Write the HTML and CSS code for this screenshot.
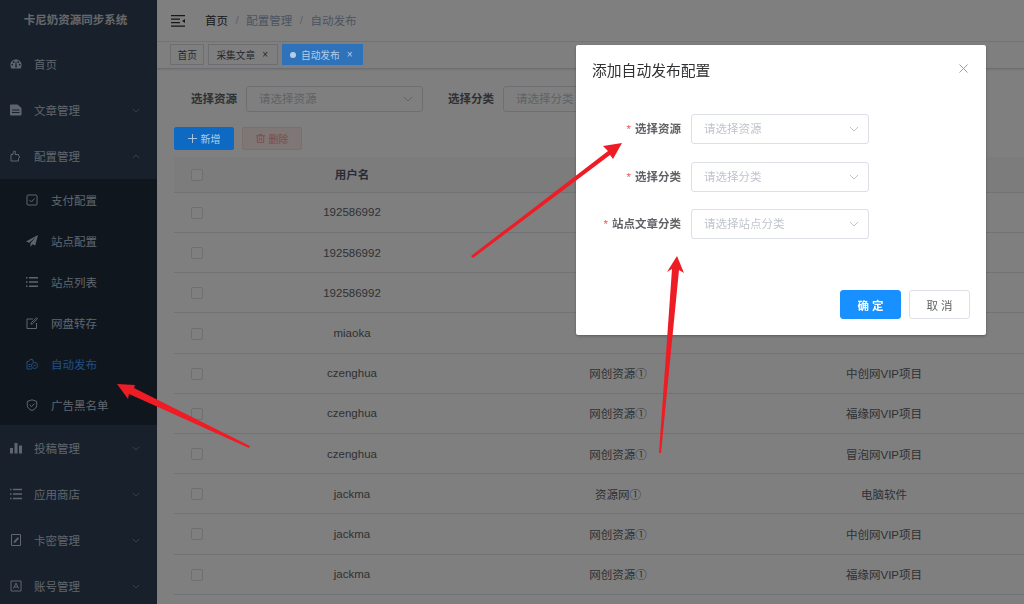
FILE: index.html
```html
<!DOCTYPE html>
<html>
    <head>
        <meta charset="utf-8">
        <title>自动发布</title>
        <link rel="stylesheet" href="styles.css">
    </head>
    <body>
        <div class="app">
            <aside class="sidebar">
                <div class="logo">卡尼奶资源同步系统</div>
                <div class="menu-item">
                    <svg class="icon" viewBox="0 0 12 12"><path fill="currentColor" d="M6 1.5C2.8 1.5.4 3.9.4 7c0 1.300.4 2.500 1 3.500h9.200c.6-1 1-2.200 1-3.500 0-3.100-2.400-5.500-5.600-5.500zM2.300 7.600a.9.9 0 1 1 0-1.800.9.9 0 0 1 0 1.800zm1.400-2.700a.9.9 0 1 1 0-1.800.9.9 0 0 1 0 1.800zM6.700 9.300a1.100 1.100 0 0 1-1.500-.9l.5-5h.6l.5 5c.1.200 0 .6-.1.900zm1.600-4.400a.9.900 0 1 1 0-1.800.9.9 0 0 1 0 1.800zm1.400 2.700a.9.9 0 1 1 0-1.800.9.900 0 0 1 0 1.800z"/></svg>
                    <span>首页</span>
                </div>
                <div class="menu-item">
                    <svg class="icon" viewBox="0 0 12 12"><path fill="currentColor" d="M1 .5h6.500L11.500 4v6.500a1 1 0 0 1-1 1H1a1 1 0 0 1-1-1v-9a1 1 0 0 1 1-1zM2 5.500v1h7.500v-1zm0 2.500v1h7.500V8z"/></svg>
                    <span>文章管理</span>
                    <svg class="arrow" viewBox="0 0 10 6"><path d="M1 1l4 4 4-4"/></svg>
                </div>
                <div class="menu-item">
                    <svg class="icon" viewBox="0 0 12 12"><path fill="none" stroke="currentColor" stroke-width="1" d="M1 4.500h2V3l1-2 1.500.5L5 4.500h3.500V6l1.500 1-1.500 1.200v2.800H1z"/></svg>
                    <span>配置管理</span>
                    <svg class="arrow" viewBox="0 0 10 6"><path d="M1 5l4-4 4 4"/></svg>
                </div>
                <div class="submenu">
                    <div class="sub-item">
                        <svg class="icon" viewBox="0 0 12 12"><rect x="1" y="1" width="10" height="10" rx="1" fill="none" stroke="currentColor"/><path fill="none" stroke="currentColor" d="M3.500 6l2 2 3-3.500"/></svg>
                        <span>支付配置</span>
                    </div>
                    <div class="sub-item">
                        <svg class="icon" viewBox="0 0 12 12"><path fill="currentColor" d="M12 0L0 6.500l3.200 1.300L10 2 4.500 8.300V12l2-2.700 2.700 1.100z"/></svg>
                        <span>站点配置</span>
                    </div>
                    <div class="sub-item">
                        <svg class="icon" viewBox="0 0 12 12"><path fill="currentColor" d="M0 1h1.500v1.400H0zm3 0h9v1.400H3zM0 5.300h1.500v1.400H0zm3 0h9v1.400H3zM0 9.600h1.500V11H0zm3 0h9V11H3z"/></svg>
                        <span>站点列表</span>
                    </div>
                    <div class="sub-item">
                        <svg class="icon" viewBox="0 0 12 12"><path fill="none" stroke="currentColor" d="M7 2H1v9.500h9.500V6M5 7.200l.4-1.600L10.500.8l1 1-5 4.900z"/></svg>
                        <span>网盘转存</span>
                    </div>
                    <div class="sub-item active">
                        <svg class="icon" viewBox="0 0 12 12"><path fill="none" stroke="currentColor" d="M1 11V3.500h1.500L4 1.500h2.500L7.500 4M6 11H1"/><circle cx="8.500" cy="7.500" r="3" fill="none" stroke="currentColor"/><path fill="none" stroke="currentColor" d="M7.500 7.500h2M2.500 6.500h2M2.500 8.500h2"/></svg>
                        <span>自动发布</span>
                    </div>
                    <div class="sub-item">
                        <svg class="icon" viewBox="0 0 12 12"><path fill="none" stroke="currentColor" d="M6 .8l4.700 1.600v3.800c0 2.600-2 4.300-4.700 5.200-2.700-.9-4.700-2.600-4.700-5.200V2.400z"/><path fill="none" stroke="currentColor" d="M3.700 5.800l1.800 1.800 2.900-3"/></svg>
                        <span>广告黑名单</span>
                    </div>
                </div>
                <div class="menu-item">
                    <svg class="icon" viewBox="0 0 12 12"><path fill="currentColor" d="M0 6h3v5.500H0zM4.500 1h3v10.500h-3zM9 3.500h3v8H9z"/></svg>
                    <span>投稿管理</span>
                    <svg class="arrow" viewBox="0 0 10 6"><path d="M1 1l4 4 4-4"/></svg>
                </div>
                <div class="menu-item">
                    <svg class="icon" viewBox="0 0 12 12"><path fill="currentColor" d="M0 .8h1.500v1.400H0zm3 0h9v1.400H3zM0 5.300h1.500v1.400H0zm3 0h9v1.400H3zM0 9.800h1.500v1.400H0zm3 0h9v1.400H3z"/></svg>
                    <span>应用商店</span>
                    <svg class="arrow" viewBox="0 0 10 6"><path d="M1 1l4 4 4-4"/></svg>
                </div>
                <div class="menu-item">
                    <svg class="icon" viewBox="0 0 12 12"><path fill="none" stroke="currentColor" d="M1.500.5h9v11h-9z"/><path fill="currentColor" d="M3.500 9l.6-2 3.600-3.800 1.300 1.300-3.600 3.900z"/></svg>
                    <span>卡密管理</span>
                    <svg class="arrow" viewBox="0 0 10 6"><path d="M1 1l4 4 4-4"/></svg>
                </div>
                <div class="menu-item">
                    <svg class="icon" viewBox="0 0 12 12"><path fill="none" stroke="currentColor" d="M1 1h10v10H1z"/><path fill="none" stroke="currentColor" d="M3.500 8.500L6 3l2.500 5.500M4.500 7h3"/></svg>
                    <span>账号管理</span>
                    <svg class="arrow" viewBox="0 0 10 6"><path d="M1 1l4 4 4-4"/></svg>
                </div>
            </aside>

            <main class="main">
                <div class="navbar">
                    <svg class="hamburger" viewBox="0 0 14 12"><path fill="currentColor" d="M0 0h14v1.300H0zM0 3.500h9v1.300H0zM0 7h9v1.300H0zM0 10.500h14v1.300H0zM14 4l-3 2 3 2z"/></svg>
                    <div class="breadcrumb">
                        <span class="crumb-home">首页</span>
                        <span class="sep">/</span>
                        <span>配置管理</span>
                        <span class="sep">/</span>
                        <span>自动发布</span>
                    </div>
                </div>
                <div class="tags">
                    <span class="tag">首页</span>
                    <span class="tag closable">采集文章<i>×</i></span>
                    <span class="tag closable current"><b></b>自动发布<i>×</i></span>
                </div>
                <div class="content">
                    <div class="filter">
                        <label>选择资源</label>
                        <div class="select filter-select">
                            <span>请选择资源</span>
                            <svg class="caret" viewBox="0 0 10 6"><path d="M1 1l4 4 4-4"/></svg>
                        </div>
                        <label>选择分类</label>
                        <div class="select filter-select">
                            <span>请选择分类</span>
                            <svg class="caret" viewBox="0 0 10 6"><path d="M1 1l4 4 4-4"/></svg>
                        </div>
                    </div>
                    <div class="actions">
                        <button class="btn btn-add">
                            <svg viewBox="0 0 10 10"><path d="M5 0v10M0 5h10"/></svg>新增
                        </button>
                        <button class="btn btn-del">
                            <svg viewBox="0 0 10 10"><path d="M0 2h10M3.500 2V.5h3V2M1.500 2v7.500h7V2M4 4v3.500M6 4v3.500"/></svg>删除
                        </button>
                    </div>
                    <table class="table">
                        <colgroup>
                            <col class="col-check"><col class="col-data"><col class="col-data"><col class="col-data"><col>
                        </colgroup>
                        <thead>
                            <tr><th><span class="check"></span></th><th>用户名</th><th></th><th></th><th></th></tr>
                        </thead>
                        <tbody>
                            <tr><td><span class="check"></span></td><td>192586992</td><td></td><td></td><td></td></tr>
                            <tr><td><span class="check"></span></td><td>192586992</td><td></td><td></td><td></td></tr>
                            <tr><td><span class="check"></span></td><td>192586992</td><td></td><td></td><td></td></tr>
                            <tr><td><span class="check"></span></td><td>miaoka</td><td></td><td></td><td></td></tr>
                            <tr><td><span class="check"></span></td><td>czenghua</td><td>网创资源①</td><td>中创网VIP项目</td><td></td></tr>
                            <tr><td><span class="check"></span></td><td>czenghua</td><td>网创资源①</td><td>福缘网VIP项目</td><td></td></tr>
                            <tr><td><span class="check"></span></td><td>czenghua</td><td>网创资源①</td><td>冒泡网VIP项目</td><td></td></tr>
                            <tr><td><span class="check"></span></td><td>jackma</td><td>资源网①</td><td>电脑软件</td><td></td></tr>
                            <tr><td><span class="check"></span></td><td>jackma</td><td>网创资源①</td><td>中创网VIP项目</td><td></td></tr>
                            <tr><td><span class="check"></span></td><td>jackma</td><td>网创资源①</td><td>福缘网VIP项目</td><td></td></tr>
                        </tbody>
                    </table>
                </div>
            </main>
        </div>

        <div class="overlay"></div>

        <div class="dialog">
            <div class="dialog-header">
                <span class="dialog-title">添加自动发布配置</span>
                <svg class="dialog-close" viewBox="0 0 10 10"><path d="M.5.5l9 9M9.500.5l-9 9"/></svg>
            </div>
            <div class="dialog-body">
                <div class="form-row">
                    <label><em>*</em>选择资源</label>
                    <div class="select">
                        <span>请选择资源</span>
                        <svg class="caret" viewBox="0 0 10 6"><path d="M1 1l4 4 4-4"/></svg>
                    </div>
                </div>
                <div class="form-row">
                    <label><em>*</em>选择分类</label>
                    <div class="select">
                        <span>请选择分类</span>
                        <svg class="caret" viewBox="0 0 10 6"><path d="M1 1l4 4 4-4"/></svg>
                    </div>
                </div>
                <div class="form-row">
                    <label><em>*</em>站点文章分类</label>
                    <div class="select">
                        <span>请选择站点分类</span>
                        <svg class="caret" viewBox="0 0 10 6"><path d="M1 1l4 4 4-4"/></svg>
                    </div>
                </div>
            </div>
            <div class="dialog-footer">
                <button class="btn-ok">确 定</button>
                <button class="btn-cancel">取 消</button>
            </div>
        </div>

        <svg class="marks" viewBox="0 0 1024 604">
            <polygon points="471,256 473,258 610,155 613,159 622,143 603,146 608,151"/>
            <polygon points="659,453 661,453 679,270 684,273 677,256 667,272 672,269"/>
            <polygon points="250,446 249,448 129,394 128,399 117,384 135,385 134,388"/>
        </svg>
    </body>
</html>
```

FILE: styles.css
```css
*{
    box-sizing: border-box;
}
html,body{
    margin: 0;
    height: 100%;
    overflow: hidden;
}
body{
    font-family: "Liberation Sans", "Noto Sans CJK SC", sans-serif;
    font-size: 11.5px;
    color: #606266;
    background: #fff;
}
.app{
    display: flex;
    height: 604px;
}

/* sidebar */
.sidebar{
    flex: 0 0 157px;
    background: #304156;
    color: #bfcbd9;
}
.logo{
    height: 41px;
    padding-right: 6px;
    line-height: 41px;
    text-align: center;
    font-weight: 700;
    color: #fff;
    opacity: .75;
}
.menu-item{
    display: flex;
    align-items: center;
    height: 46px;
    padding: 0 17px 0 10px;
}
.menu-item .icon{
    width: 12px;
    height: 12px;
    margin-right: 12px;
}
.menu-item .arrow{
    width: 8px;
    height: 5px;
    margin-left: auto;
    fill: none;
    stroke: currentColor;
    stroke-width: 1;
    opacity: .6;
}
.submenu{
    background: #1f2d3d;
    height: 246px;
}
.sub-item{
    display: flex;
    align-items: center;
    height: 41px;
    padding-left: 26px;
}
.sub-item .icon{
    width: 12px;
    height: 12px;
    margin-right: 13px;
}
.sub-item.active{
    color: #409eff;
}

/* top bars */
.main{
    flex: 1;
    min-width: 0;
}
.navbar{
    display: flex;
    align-items: center;
    height: 42px;
    padding-left: 14px;
    border-bottom: 1px solid #e8e8e8;
}
.hamburger{
    width: 14px;
    height: 12px;
    margin-right: 20px;
    color: #303133;
}
.breadcrumb{
    display: flex;
    align-items: center;
    gap: 7.500px;
    padding-bottom: 2px;
    color: #97a8be;
}
.crumb-home{
    color: #303133;
}
.breadcrumb .sep{
    color: #c0c4cc;
}
.tags{
    display: flex;
    gap: 4px;
    height: 27px;
    padding: 2px 0 0 13px;
    border-bottom: 1px solid #d8dce5;
    box-shadow: 0 1px 2px rgba(0,0,0,.1);
}
.tag{
    display: flex;
    align-items: center;
    height: 21px;
    padding: 0 6.500px;
    font-size: 9.700px;
    color: #495060;
    border: 1px solid #d8dce5;
}
.tag.closable{
    padding: 0 9px 0 7px;
}
.tag i{
    margin-left: 7px;
    font-style: normal;
    font-size: 10px;
}
.tag.current{
    position: relative;
    z-index: 1;
    padding-left: 7px;
    color: #b5cde8;
    background: #2e73ba;
    border-color: #2e73ba;
}
.tag b{
    width: 6px;
    height: 6px;
    margin-right: 5px;
    border-radius: 50%;
    background: #b5cde8;
}

/* filter and table */
.content{
    padding: 17px 0 0 17px;
}
.filter{
    display: flex;
    align-items: center;
    height: 26px;
    padding-left: 17px;
}
.filter label{
    width: 55px;
    flex: none;
    margin-top: -2px;
    font-weight: 700;
}
.select{
    display: flex;
    align-items: center;
    justify-content: space-between;
    width: 178px;
    height: 30px;
    padding: 0 9px 0 12px;
    color: #c0c4cc;
    background: #fff;
    border: 1px solid #dcdfe6;
    border-radius: 3px;
}
.select span{
    margin-top: -2px;
}
.filter-select{
    width: 177px;
    height: 26px;
    margin-right: 25px;
    flex: none;
}
.caret{
    width: 10px;
    height: 6px;
    fill: none;
    stroke: #c0c4cc;
    stroke-width: 1;
}
.actions{
    display: flex;
    gap: 8px;
    margin-top: 15px;
}
.btn{
    display: flex;
    align-items: center;
    justify-content: center;
    gap: 4px;
    width: 60px;
    height: 23px;
    padding: 0;
    font: inherit;
    font-size: 10px;
    border-radius: 2px;
}
.btn svg{
    width: 9px;
    height: 9px;
    fill: none;
    stroke: currentColor;
    stroke-width: 1;
}
.btn-add{
    position: relative;
    z-index: 1;
    color: #b5cde8;
    background: #0e69c3;
    border: 1px solid #0e69c3;
}
.btn-del{
    color: #f89898;
    background: #ffeded;
    border: 1px solid #ffdbdb;
}
.table{
    table-layout: fixed;
    width: 850px;
    margin-top: 7px;
    border-collapse: collapse;
}
.col-check{
    width: 45px;
}
.col-data{
    width: 266px;
}
.table th{
    height: 35.400px;
    font-weight: 700;
    color: #515a6e;
    background: #f8f8f9;
    border-bottom: 1px solid #dfe6ec;
}
.table td{
    height: 40.200px;
    text-align: center;
    border-bottom: 1px solid #dfe6ec;
}
.check{
    display: inline-block;
    width: 12px;
    height: 12px;
    vertical-align: middle;
    background: #fff;
    border: 1px solid #dcdfe6;
    border-radius: 2px;
}

/* dialog */
.overlay{
    position: fixed;
    inset: 0;
    background: rgba(0,0,0,.5);
}
.dialog{
    position: fixed;
    z-index: 2;
    left: 576px;
    top: 45px;
    width: 410px;
    height: 290px;
    background: #fff;
    border-radius: 2px;
    box-shadow: 0 1px 3px rgba(0,0,0,.3);
}
.dialog-header{
    display: flex;
    align-items: center;
    justify-content: space-between;
    height: 52px;
    padding: 0 18px 4px 16px;
}
.dialog-title{
    font-size: 14.800px;
    color: #303133;
}
.dialog-close{
    width: 9px;
    height: 9px;
    margin-top: -1px;
    fill: none;
    stroke: #909399;
    stroke-width: 1;
}
.dialog-body{
    display: flex;
    flex-direction: column;
    gap: 17.500px;
    padding-top: 17px;
}
.form-row{
    display: flex;
    align-items: center;
    gap: 10px;
}
.form-row label{
    width: 105px;
    margin-top: -2px;
    text-align: right;
    font-weight: 700;
}
.form-row em{
    margin-right: 4px;
    font-style: normal;
    font-weight: 400;
    color: #ff4d4f;
}
.dialog-footer{
    display: flex;
    justify-content: flex-end;
    gap: 8px;
    margin-top: 51px;
    padding-right: 16px;
}
.btn-ok,
.btn-cancel{
    width: 61px;
    height: 29px;
    padding: 0;
    font: inherit;
    border-radius: 3px;
}
.btn-ok{
    font-weight: 700;
    color: #fff;
    background: #1890ff;
    border: 1px solid #1890ff;
}
.btn-cancel{
    color: #606266;
    background: #fff;
    border: 1px solid #dcdfe6;
}

/* red arrows drawn over the screenshot */
.marks{
    position: fixed;
    z-index: 3;
    inset: 0;
    width: 1024px;
    height: 604px;
    fill: #ee1c25;
    pointer-events: none;
}
```
